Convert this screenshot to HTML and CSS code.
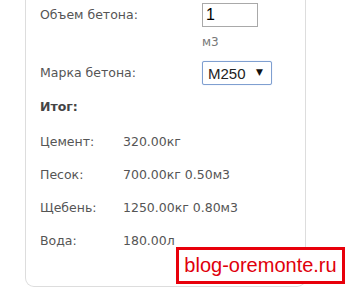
FILE: index.html
```html
<!DOCTYPE html>
<html lang="ru">
<head>
  <meta charset="UTF-8">
  <meta name="viewport" content="width=device-width, initial-scale=1.0">
  <title>Калькулятор бетона</title>

  <link rel="stylesheet" href="styles.css">
</head>
<body>
  <div class="calc">
    <div class="field">
      <label for="volume">Объем бетона:</label>
      <div class="field-control">
        <input type="text" id="volume" value="1">
        <span class="unit">м3</span>
      </div>
    </div>

    <div class="field grade">
      <label for="grade">Марка бетона:</label>
      <div class="select-wrap">
        <select id="grade">
          <option>M150</option>
          <option>M200</option>
          <option selected>M250</option>
          <option>M300</option>
        </select>
      </div>
    </div>

    <h3 class="total-title">Итог:</h3>

    <div class="results">
      <div class="result">
        <span class="result-name">Цемент:</span>
        <span class="result-value">320.00кг</span>
      </div>
      <div class="result">
        <span class="result-name">Песок:</span>
        <span class="result-value">700.00кг 0.50м3</span>
      </div>
      <div class="result">
        <span class="result-name">Щебень:</span>
        <span class="result-value">1250.00кг 0.80м3</span>
      </div>
      <div class="result">
        <span class="result-name">Вода:</span>
        <span class="result-value">180.00л</span>
      </div>
    </div>
  </div>

  <div class="watermark">blog-oremonte.ru</div>
</body>
</html>
```

FILE: styles.css
```css
/* Reset */
* {
  margin: 0;
  padding: 0;
  box-sizing: border-box;
}

body {
  font-family: 'DejaVu Sans', Verdana, sans-serif;
  font-size: 12.5px;
  color: #555;
  background-color: #fff;
  position: relative;
  height: 289px;
  overflow: hidden;
}

.calc {
  margin-left: 25px;
  width: 281px;
  padding: 3px 0 29px 14px;
  border: 1px solid #ddd;
  border-top: none;
  border-radius: 0 0 9px 9px;
}

.field {
  display: grid;
  grid-template-columns: 162px auto;
}

.field label {
  line-height: 24px;
}

.field-control {
  display: flex;
  flex-direction: column;
  align-items: flex-start;
}

.field-control input {
  width: 56px;
  height: 24px;
  border: 1px solid #a9a9a9;
  padding: 0 3px;
  font-family: 'Liberation Sans', Arial, sans-serif;
  font-size: 16px;
  color: #000;
  outline: none;
}

.unit {
  margin-top: 7px;
  line-height: 16px;
  font-size: 12px;
  color: #777;
}

.grade {
  margin-top: 11px;
}

.select-wrap {
  position: relative;
  width: 70px;
}

.select-wrap select {
  appearance: none;
  -webkit-appearance: none;
  width: 70px;
  height: 24px;
  padding: 0 0 0 5px;
  border: 1px solid #7f9fd0;
  border-radius: 2px;
  background-color: #fff;
  font-family: 'Liberation Sans', Arial, sans-serif;
  font-size: 15px;
  color: #222;
  box-shadow: 0 0 1px #aac4ee;
}

.select-wrap::after {
  content: "\25BC";
  position: absolute;
  right: 9px;
  top: 6px;
  font-size: 9px;
  color: #111;
  pointer-events: none;
}

.total-title {
  margin-top: 12px;
  font-size: 12.5px;
  line-height: 20px;
  font-weight: bold;
  color: #444;
}

.results {
  margin-top: 8px;
}

.result {
  display: grid;
  grid-template-columns: 83px auto;
  line-height: 33px;
}

.watermark {
  position: absolute;
  left: 176px;
  top: 247px;
  width: 169px;
  height: 37px;
  border: 3px solid #e8000b;
  background-color: #fff;
  color: #e0000b;
  font-family: 'Liberation Sans', Arial, sans-serif;
  font-size: 20px;
  line-height: 30px;
  text-align: center;
}
```
